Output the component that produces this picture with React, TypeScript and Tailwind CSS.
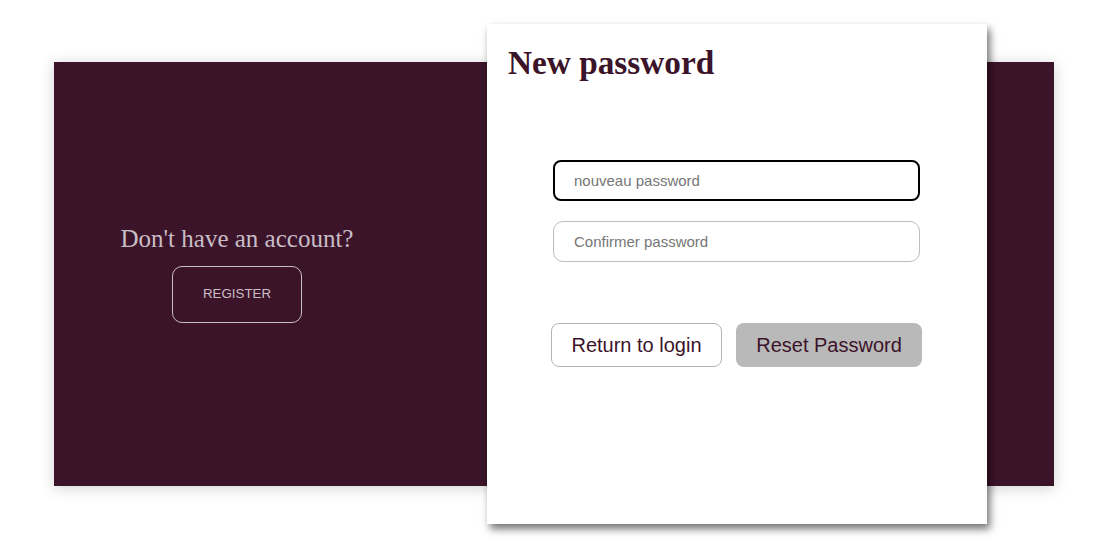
import React from 'react';

const App: React.FC = () => {
  return (
    <div className="w-[1117px] h-[551px] bg-white overflow-hidden">
      {/* Background panel */}
      <div className="relative ml-[54px] mt-[62px] w-[1000px] h-[424px] bg-[#3c1429] shadow-[0_2px_14px_rgba(0,0,0,0.18)] flex">
        <div className="w-[366px] h-full flex flex-col items-center justify-center">
          <p className="font-['Liberation_Serif',serif] text-[25px] leading-[29px] text-[#c9bec5] mb-[13px] mt-[-2px]">
            Don't have an account?
          </p>
          <button className="w-[130px] h-[57px] rounded-[10px] border border-[#c9bec5] font-['Liberation_Sans',Arial,sans-serif] text-[13.33px] text-[#c9bec5]">
            REGISTER
          </button>
        </div>

        {/* Reset card */}
        <div className="absolute left-[433px] top-[-38px] w-[500px] h-[500px] bg-white shadow-[3px_5px_8px_rgba(0,0,0,0.55)] pt-[22px] pl-[20px] pr-[21px] flex flex-col">
          <h1 className="pl-[1px] font-['Liberation_Serif',serif] font-bold text-[33.3px] leading-[34px] text-[#3c1429]">
            New password
          </h1>

          <div className="mt-[80px] flex flex-col items-center gap-[20px] font-['Liberation_Sans',Arial,sans-serif]">
            <input
              type="password"
              placeholder="nouveau password"
              autoFocus
              className="w-[367px] h-[41px] rounded-[8px] border-2 border-black outline-none pl-[19px] text-[15px] placeholder:text-[#767676]"
            />
            <input
              type="password"
              placeholder="Confirmer password"
              className="w-[367px] h-[41px] rounded-[10px] border border-[#bdbdbd] outline-none pl-[20px] text-[15px] placeholder:text-[#767676]"
            />
          </div>

          <div className="mt-[61px] flex justify-center gap-[14px] font-['Liberation_Sans',Arial,sans-serif] text-[20px] text-[#3c1429]">
            <button className="w-[171px] h-[44px] rounded-[8px] border border-[#b5b5b5] bg-white">
              Return to login
            </button>
            <button className="w-[186px] h-[44px] rounded-[8px] bg-[#b9b9b9]">
              Reset Password
            </button>
          </div>
        </div>
      </div>
    </div>
  );
};

export default App;
